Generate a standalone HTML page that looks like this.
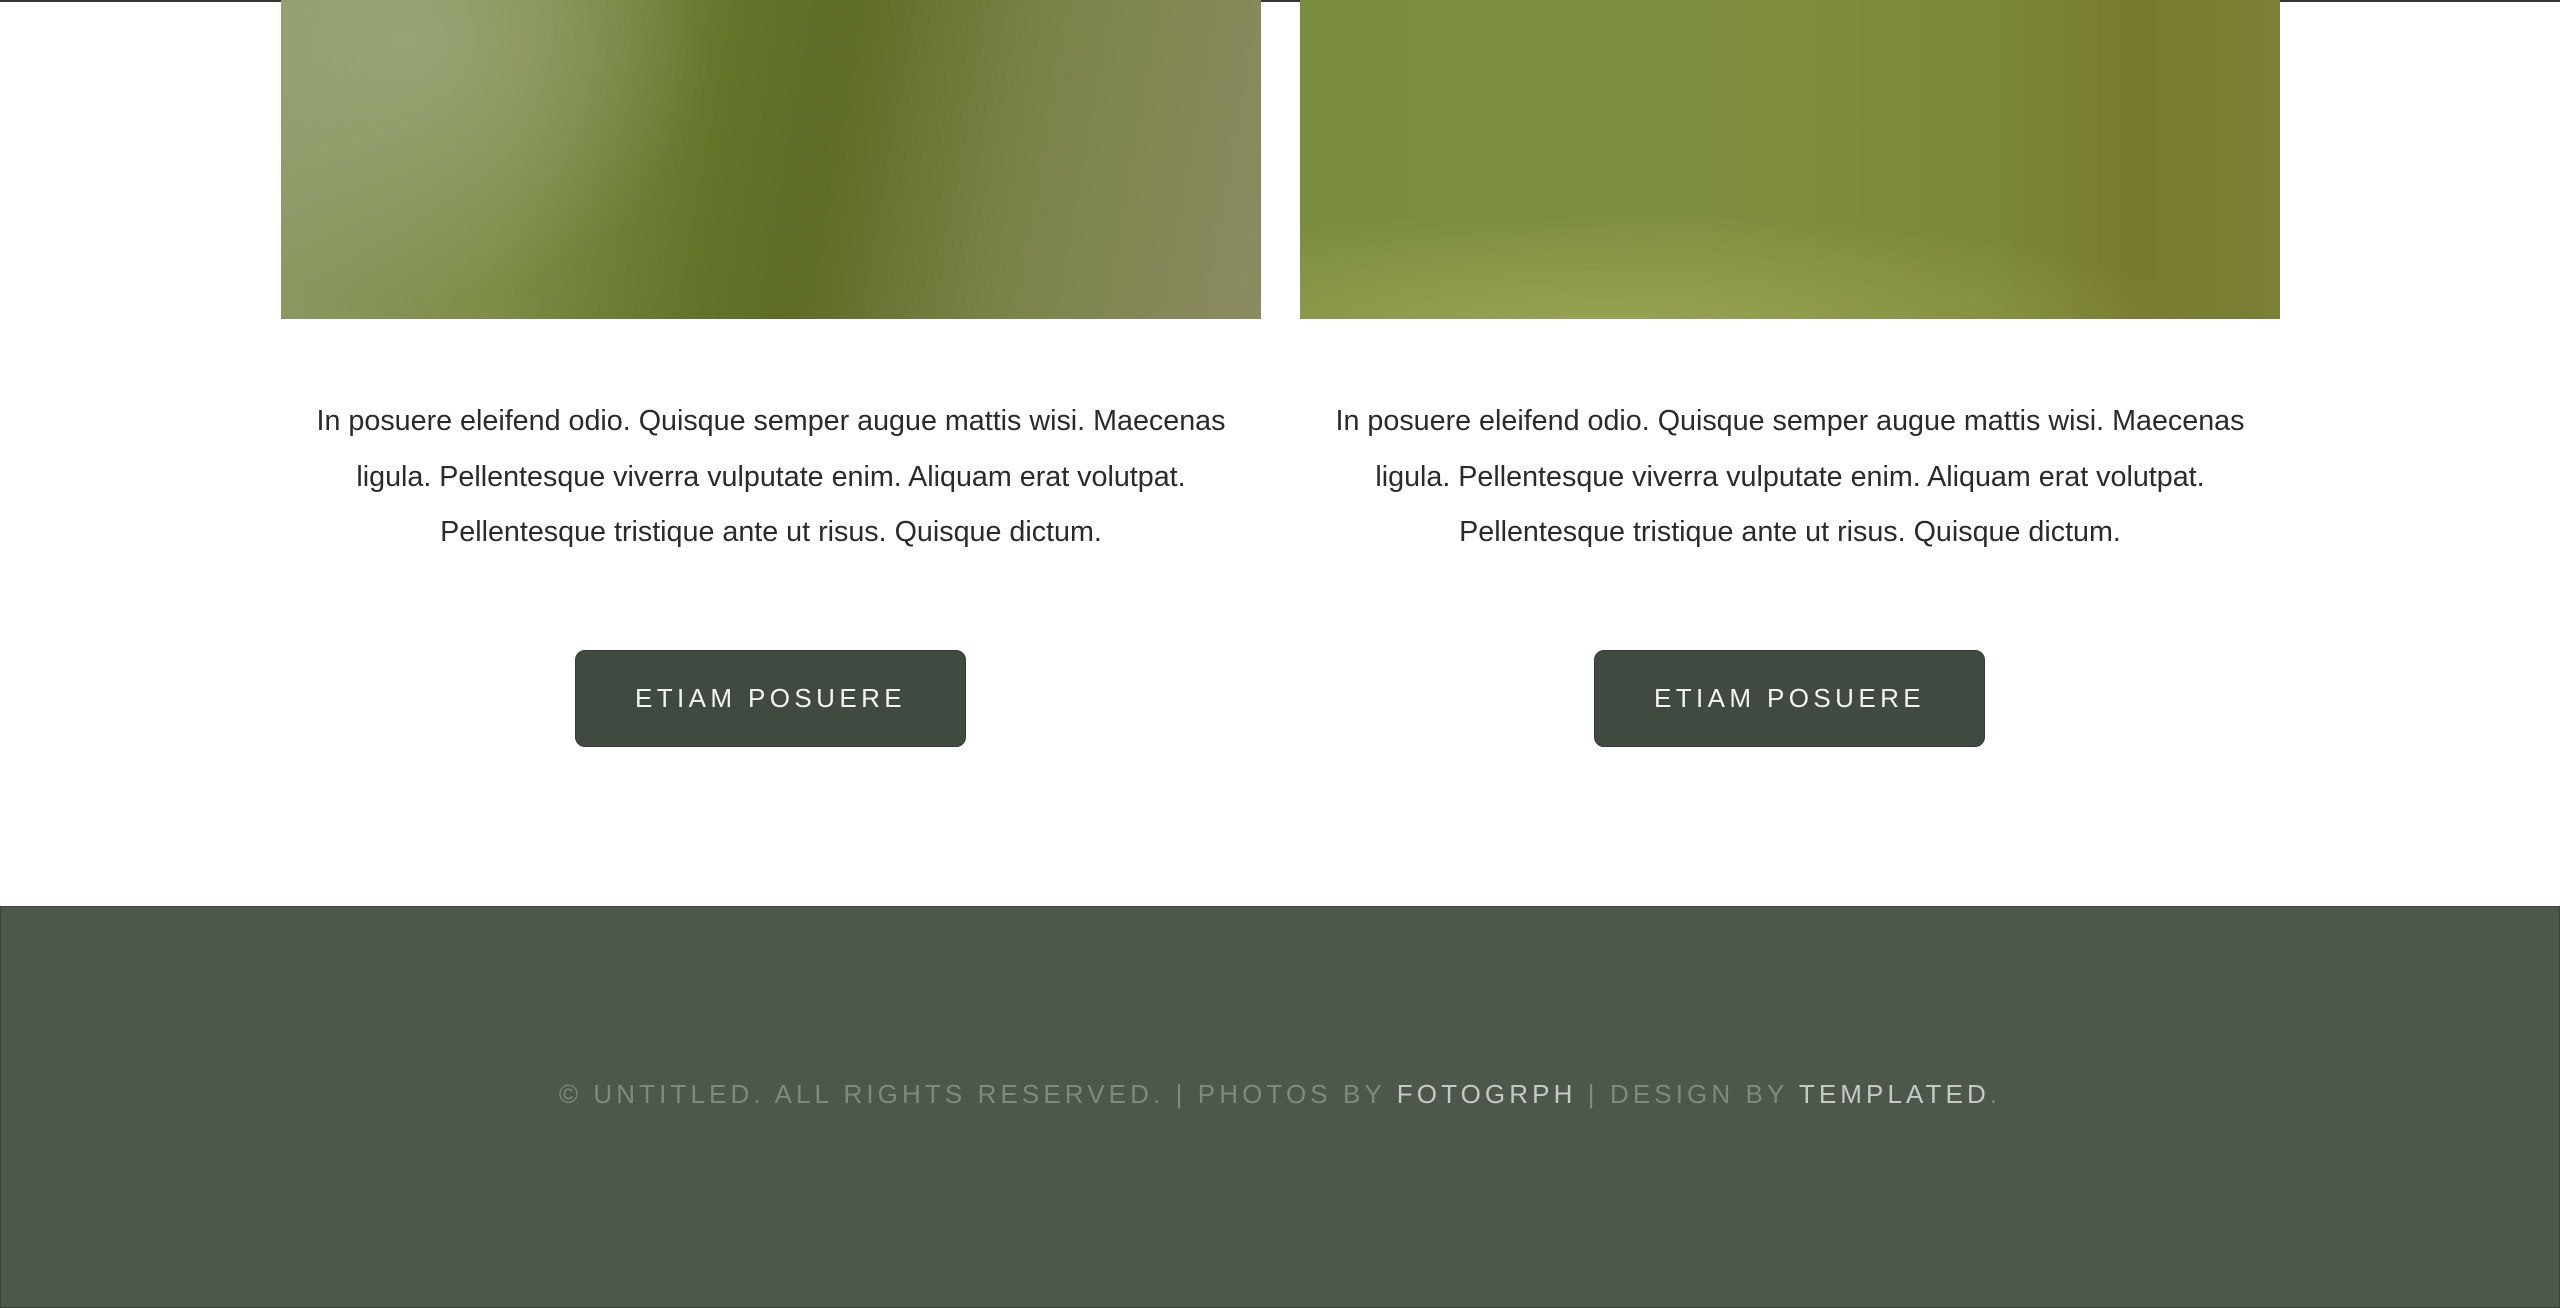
<!DOCTYPE html>
<html><head><style>
html,body{margin:0;padding:0;width:2560px;height:1308px;overflow:hidden;background:#fff;font-family:"Liberation Sans Narrow","Liberation Sans",sans-serif;}
.topline{position:absolute;left:0;top:0;width:2560px;height:2px;background:#333;}
.img{position:absolute;top:0;height:319px;width:980px;}
.i1{left:281px;background:
 radial-gradient(ellipse 300px 260px at 130px 40px,rgba(160,170,130,.7),transparent),
 linear-gradient(100deg,#8e9a68 0%,#7e8e48 25%,#63732a 45%,#5d6c26 55%,#7a8448 75%,#8b8a62 100%);}
.i2{left:1300px;background:
 radial-gradient(ellipse 600px 120px at 300px 330px,rgba(160,170,90,.8),transparent),
 linear-gradient(90deg,#7a8c3e 0%,#7e8e40 40%,#7c8838 70%,#787a2e 85%,#7a8036 100%);}
.txt{position:absolute;top:394px;width:980px;text-align:center;font-size:28.7px;line-height:55.5px;color:#2a2a2a;font-weight:300;}
.btn{position:absolute;top:650px;width:391px;height:97px;background:#414a40;border:1px solid #333a33;border-radius:10px;box-sizing:border-box;color:#f4f4f4;font-size:26px;letter-spacing:4.4px;text-align:center;line-height:95px;}
.footer{position:absolute;left:0;top:906px;width:2560px;height:402px;background:#4d574c;border:1px solid #3a423a;box-sizing:border-box;}
.ft{position:absolute;left:0;top:1074px;width:2560px;text-align:center;font-size:26px;letter-spacing:4.1px;color:#7f8a7c;line-height:40px;}
.ft b{font-weight:normal;color:#c4cac2;}
</style></head><body>
<div class="topline"></div>
<div class="img i1"></div>
<div class="img i2"></div>
<div class="txt" style="left:281px">In posuere eleifend odio. Quisque semper augue mattis wisi. Maecenas<br>ligula. Pellentesque viverra vulputate enim. Aliquam erat volutpat.<br>Pellentesque tristique ante ut risus. Quisque dictum.</div>
<div class="txt" style="left:1300px">In posuere eleifend odio. Quisque semper augue mattis wisi. Maecenas<br>ligula. Pellentesque viverra vulputate enim. Aliquam erat volutpat.<br>Pellentesque tristique ante ut risus. Quisque dictum.</div>
<div class="btn" style="left:575px">ETIAM POSUERE</div>
<div class="btn" style="left:1594px">ETIAM POSUERE</div>
<div class="footer"></div>
<div class="ft">© UNTITLED. ALL RIGHTS RESERVED. | PHOTOS BY <b>FOTOGRPH</b> | DESIGN BY <b>TEMPLATED</b>.</div>
</body></html>
